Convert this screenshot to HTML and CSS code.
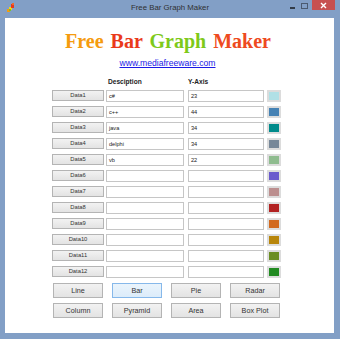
FILE: index.html
```html
<!DOCTYPE html>
<html>
<head>
<meta charset="utf-8">
<link rel="stylesheet" href="styles.css">
</head>
<body>
<div class="window">
  <div class="titlebar">
    <svg class="app-icon" width="8" height="9" viewBox="0 0 8 9">
      <rect x="0" y="6" width="3" height="3" fill="#f39a12"/>
      <rect x="2" y="4" width="3" height="3" fill="#f5d31a"/>
      <rect x="2" y="6" width="2" height="2" fill="#7cc423"/>
      <rect x="4" y="1" width="3" height="4" fill="#e63a1c"/>
      <rect x="5" y="0" width="2" height="2" fill="#f06a2a"/>
    </svg>
    <div class="title">Free Bar Graph Maker</div>
    <div class="controls">
      <span class="ctl-min"></span>
      <span class="ctl-max"></span>
      <span class="ctl-close">
        <svg width="7" height="7" viewBox="0 0 7 7"><path d="M1 1L6 6M6 1L1 6" stroke="#fff" stroke-width="1.4"/></svg>
      </span>
    </div>
  </div>
  <div class="client">
    <h1 class="headline"><span class="c-free">Free</span> <span class="c-bar">Bar</span> <span class="c-graph">Graph</span> <span class="c-maker">Maker</span></h1>
    <div class="linkrow"><a href="#" class="link">www.mediafreeware.com</a></div>
    <div class="form">
      <div class="row head">
        <span class="btn-slot"></span>
        <span class="hd hd-desc">Desciption</span>
        <span class="hd hd-y">Y-Axis</span>
        <span></span>
      </div>
      <div class="row"><button class="databtn">Data1</button><div class="tb">c#</div><div class="tb">23</div><div class="sw"><i style="background:#b0e0e6"></i></div></div>
      <div class="row"><button class="databtn">Data2</button><div class="tb">c++</div><div class="tb">44</div><div class="sw"><i style="background:#4682b4"></i></div></div>
      <div class="row"><button class="databtn">Data3</button><div class="tb">java</div><div class="tb">34</div><div class="sw"><i style="background:#008b8b"></i></div></div>
      <div class="row"><button class="databtn">Data4</button><div class="tb">delphi</div><div class="tb">34</div><div class="sw"><i style="background:#778899"></i></div></div>
      <div class="row"><button class="databtn">Data5</button><div class="tb">vb</div><div class="tb">22</div><div class="sw"><i style="background:#8fbc8f"></i></div></div>
      <div class="row"><button class="databtn">Data6</button><div class="tb"></div><div class="tb"></div><div class="sw"><i style="background:#6a5acd"></i></div></div>
      <div class="row"><button class="databtn">Data7</button><div class="tb"></div><div class="tb"></div><div class="sw"><i style="background:#bc8f8f"></i></div></div>
      <div class="row"><button class="databtn">Data8</button><div class="tb"></div><div class="tb"></div><div class="sw"><i style="background:#b22222"></i></div></div>
      <div class="row"><button class="databtn">Data9</button><div class="tb"></div><div class="tb"></div><div class="sw"><i style="background:#d2691e"></i></div></div>
      <div class="row"><button class="databtn">Data10</button><div class="tb"></div><div class="tb"></div><div class="sw"><i style="background:#b8860b"></i></div></div>
      <div class="row"><button class="databtn">Data11</button><div class="tb"></div><div class="tb"></div><div class="sw"><i style="background:#6b8e23"></i></div></div>
      <div class="row"><button class="databtn">Data12</button><div class="tb"></div><div class="tb"></div><div class="sw"><i style="background:#228b22"></i></div></div>
    </div>
    <div class="charts">
      <button class="cbtn">Line</button>
      <button class="cbtn active">Bar</button>
      <button class="cbtn">Pie</button>
      <button class="cbtn">Radar</button>
      <button class="cbtn">Column</button>
      <button class="cbtn">Pyramid</button>
      <button class="cbtn">Area</button>
      <button class="cbtn">Box Plot</button>
    </div>
  </div>
</div>
</body>
</html>
```

FILE: styles.css
```css
html, body {
  margin: 0;
  padding: 0;
  width: 340px;
  height: 339px;
  overflow: hidden;
}
.window {
  width: 340px;
  height: 339px;
  background: #829fc6;
  display: flex;
  flex-direction: column;
  box-sizing: border-box;
  font-family: "Liberation Sans", Arial, sans-serif;
}
.titlebar {
  height: 18px;
  display: flex;
  align-items: flex-start;
  position: relative;
  flex: none;
}
.app-icon {
  margin: 3px 0 0 7px;
}
.title {
  position: absolute;
  left: 0;
  right: 0;
  top: 2px;
  text-align: center;
  font-size: 7.8px;
  line-height: 12px;
  color: #303030;
}
.controls {
  margin-left: auto;
  margin-right: 5px;
  display: flex;
  align-items: flex-start;
  position: relative;
}
.ctl-min {
  width: 5px;
  height: 2px;
  background: #333c48;
  margin: 7px 6px 0 0;
}
.ctl-max {
  width: 5px;
  height: 4px;
  border: 1px solid #4b5a70;
  margin: 3px 4px 0 0;
}
.ctl-close {
  width: 23px;
  height: 10px;
  background: #c75050;
  display: flex;
  align-items: center;
  justify-content: center;
}
.client {
  flex: 1;
  margin: 0 6px 6px 5px;
  background: #fff;
  display: flex;
  flex-direction: column;
}
.headline {
  margin: 11px 0 0 0;
  font-family: "Liberation Serif", "Times New Roman", serif;
  font-size: 20px;
  line-height: 24px;
  font-weight: bold;
  text-align: center;
  word-spacing: 2px;
  letter-spacing: 0;
  padding-right: 3px;
}
.c-free { color: #f59b0e; }
.c-bar { color: #ea3a1b; }
.c-graph { color: #7ec91a; }
.c-maker { color: #ee4a20; }
.linkrow {
  margin-top: 2px;
  text-align: center;
  line-height: 12px;
  padding-right: 4px;
}
.link {
  font-size: 8.6px;
  color: #1a1ae6;
  text-decoration: underline;
}
.form {
  margin-top: 8px;
  padding-left: 47px;
  display: flex;
  flex-direction: column;
  gap: 4px;
}
.row {
  display: grid;
  grid-template-columns: 52px 76px 76px 14px;
  column-gap: 4px;
  align-items: center;
  height: 12px;
}
.row > .tb:first-of-type {
  margin-left: -2px;
}
.head {
  height: 10px;
  margin-bottom: -2px;
}
.hd {
  font-size: 6.6px;
  font-weight: bold;
  color: #222;
  line-height: 10px;
}
.databtn {
  height: 11px;
  margin: 0;
  padding: 0;
  border: 1px solid #b4b4b4;
  background: linear-gradient(#f2f2f2, #e3e3e3);
  font-family: "Liberation Sans", Arial, sans-serif;
  font-size: 5.8px;
  line-height: 9px;
  color: #333;
  box-sizing: border-box;
}
.tb {
  height: 12px;
  box-sizing: border-box;
  border: 1px solid #c6c6c6;
  background: #fff;
  font-size: 5.6px;
  line-height: 10px;
  padding-left: 2px;
  color: #222;
}
.sw {
  width: 14px;
  height: 12px;
  box-sizing: border-box;
  background: #dcdcdc;
  padding: 2px;
  margin-top: 1px;
  margin-left: -1px;
}
.sw i {
  display: block;
  width: 100%;
  height: 100%;
}
.charts {
  margin-top: 6px;
  padding-left: 48px;
  display: grid;
  grid-template-columns: repeat(4, 50px);
  column-gap: 9px;
  row-gap: 5px;
}
.cbtn {
  height: 15px;
  margin: 0;
  padding: 0;
  border: 1px solid #b4b4b4;
  background: linear-gradient(#f2f2f2, #e3e3e3);
  font-family: "Liberation Sans", Arial, sans-serif;
  font-size: 7.2px;
  color: #333;
  box-sizing: border-box;
}
.cbtn.active {
  border-color: #86b8ea;
  background: linear-gradient(#eaf4fc, #dcecfa);
}
```
